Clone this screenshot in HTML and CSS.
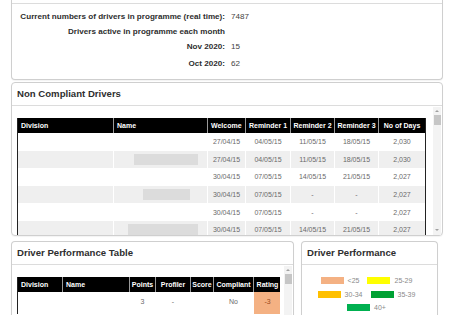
FILE: index.html
```html
<!DOCTYPE html>
<html>
<head>
<meta charset="utf-8">
<link rel="stylesheet" href="styles.css">
</head>
<body>
<div class="page">
  <section class="panel panel-cut">
    <div class="panel-body stats">
      <div class="stat-label">Current numbers of drivers in programme (real time):</div><div class="stat-value">7487</div>
      <div class="stat-label">Drivers active in programme each month</div><div class="stat-value"></div>
      <div class="stat-label">Nov 2020:</div><div class="stat-value">15</div>
      <div class="stat-label last">Oct 2020:</div><div class="stat-value last">62</div>
    </div>
  </section>

  <section class="panel panel-nc">
    <h2 class="panel-title">Non Compliant Drivers</h2>
    <div class="panel-body scroll-wrap nc-body">
      <div class="scroll-content nc-content">
        <table class="grid nc-table">
          <colgroup>
            <col class="c-div"><col class="c-name"><col class="c-wel"><col class="c-r1"><col class="c-r2"><col class="c-r3"><col class="c-days">
          </colgroup>
          <thead>
            <tr><th class="left">Division</th><th class="left">Name</th><th class="left">Welcome</th><th>Reminder 1</th><th>Reminder 2</th><th>Reminder 3</th><th>No of Days</th></tr>
          </thead>
          <tbody>
            <tr><td></td><td></td><td>27/04/15</td><td>04/05/15</td><td>11/05/15</td><td>18/05/15</td><td>2,030</td></tr>
            <tr class="alt"><td></td><td><span class="redact r1"></span></td><td>27/04/15</td><td>04/05/15</td><td>11/05/15</td><td>18/05/15</td><td>2,030</td></tr>
            <tr><td></td><td></td><td>30/04/15</td><td>07/05/15</td><td>14/05/15</td><td>21/05/15</td><td>2,027</td></tr>
            <tr class="alt"><td></td><td><span class="redact r2"></span></td><td>30/04/15</td><td>07/05/15</td><td>-</td><td>-</td><td>2,027</td></tr>
            <tr><td></td><td></td><td>30/04/15</td><td>07/05/15</td><td>-</td><td>-</td><td>2,027</td></tr>
            <tr class="alt"><td></td><td><span class="redact r3"></span></td><td>30/04/15</td><td>07/05/15</td><td>14/05/15</td><td>21/05/15</td><td>2,027</td></tr>
          </tbody>
        </table>
      </div>
      <div class="scrollbar nc-bar">
        <span class="arrow up"></span>
        <span class="thumb"></span>
        <span class="spacer"></span>
        <span class="arrow down"></span>
      </div>
    </div>
  </section>

  <div class="bottom-row">
    <section class="panel">
      <h2 class="panel-title">Driver Performance Table</h2>
      <div class="panel-body scroll-wrap">
        <div class="scroll-content perf-content">
          <table class="grid perf-table">
            <colgroup>
              <col class="p-div"><col class="p-name"><col class="p-pts"><col class="p-prof"><col class="p-score"><col class="p-comp"><col class="p-rate">
            </colgroup>
            <thead>
              <tr><th class="left">Division</th><th class="left">Name</th><th>Points</th><th>Profiler</th><th>Score</th><th>Compliant</th><th>Rating</th></tr>
            </thead>
            <tbody>
              <tr><td></td><td></td><td>3</td><td>-</td><td></td><td>No</td><td class="rate-low">-3</td></tr>
            </tbody>
          </table>
        </div>
        <div class="scrollbar perf-bar">
          <span class="arrow up"></span>
          <span class="thumb"></span>
          <span class="spacer"></span>
        </div>
      </div>
    </section>

    <section class="panel">
      <h2 class="panel-title">Driver Performance</h2>
      <div class="panel-body legend">
        <div class="legend-row">
          <span class="item"><i class="sw c-salmon"></i>&lt;25</span>
          <span class="item"><i class="sw c-yellow"></i>25-29</span>
        </div>
        <div class="legend-row">
          <span class="item"><i class="sw c-orange"></i>30-34</span>
          <span class="item"><i class="sw c-green"></i>35-39</span>
        </div>
        <div class="legend-row">
          <span class="item"><i class="sw c-green2"></i>40+</span>
        </div>
      </div>
    </section>
  </div>
</div>
</body>
</html>
```
FILE: styles.css
```css
* { box-sizing: border-box; }
html, body { margin: 0; padding: 0; background: #fff; }
body {
  font-family: "Liberation Sans", Arial, sans-serif;
  color: #333;
  overflow: hidden;
}
.page {
  width: 450px;
  padding: 0 7px 0 11px;
}

/* panels */
.panel {
  border: 1px solid #cfcfcf;
  border-radius: 4px;
  background: #fff;
  box-shadow: 0 1px 1px rgba(0,0,0,0.05);
}
.panel-cut {
  border-top: 0;
  border-radius: 0 0 4px 4px;
  padding-top: 3px;
}
.panel-title {
  margin: 0;
  height: 23px;
  line-height: 22px;
  padding: 0 0 0 5px;
  border-bottom: 1px solid #dcdcdc;
  font-size: 9.6px;
  font-weight: bold;
  color: #2e2e2e;
}
.panel-cut .panel-body { border-top: 1px solid #dcdcdc; }

/* stats */
.stats {
  display: grid;
  grid-template-columns: 213px auto;
  column-gap: 6px;
  padding: 5px 0 8px 0;
  font-size: 8.1px;
  line-height: 15px;
}
.stat-label { text-align: right; font-weight: bold; color: #2e2e2e; }
.stat-value { color: #444; }
.stats .last { margin-top: 2px; }

/* non compliant */
.panel-nc { margin-top: 2px; }
.scroll-wrap { display: flex; }
.nc-body { height: 129px; }
.scroll-content { flex: 1; overflow: hidden; }
.nc-content { padding: 12px 0 0 5px; }

.grid {
  border-collapse: collapse;
  table-layout: fixed;
  border-left: 1px solid #222;
  border-right: 1px solid #222;
  font-size: 7px;
}
.grid th {
  background: #000;
  color: #fff;
  font-weight: bold;
  height: 15px;
  padding: 0 1px;
  text-align: center;
  border-left: 1px solid #9a9a9a;
  white-space: nowrap;
}
.grid th:first-child { border-left: 0; }
.grid th.left { text-align: left; padding-left: 3px; }
.grid td {
  height: 17.6px;
  padding: 0;
  text-align: center;
  color: #6a6a6a;
  border-left: 1.5px solid #fff;
  white-space: nowrap;
}
.grid td:first-child { border-left: 0; }
.grid tr.alt td { background: #efefef; }

.nc-table { width: 409px; }
.c-div { width: 96px; }
.c-name { width: 94px; }
.c-wel { width: 38px; }
.c-r1 { width: 45px; }
.c-r2 { width: 44px; }
.c-r3 { width: 44px; }
.c-days { width: 47px; }

.redact {
  display: block;
  height: 11px;
  background: #dcdcdc;
}
.redact.r1 { width: 64px; margin-left: 20px; }
.redact.r2 { width: 47px; margin-left: 29px; }
.redact.r3 { width: 70px; margin-left: 14px; }

/* fake scrollbar */
.scrollbar {
  width: 8px;
  margin: 1px 1px 0 7px;
  background: #f3f3f3;
  display: flex;
  flex-direction: column;
  align-items: center;
}
.scrollbar .arrow {
  width: 0; height: 0;
  border-left: 2px solid transparent;
  border-right: 2px solid transparent;
  margin: 3px 0 2px;
}
.scrollbar .arrow.up { border-bottom: 2px solid #a0a0a0; }
.scrollbar .arrow.down { border-top: 2px solid #a0a0a0; margin: 2px 0 4px; }
.scrollbar .thumb {
  width: 7px;
  height: 10px;
  background: #c6c6c6;
  margin-top: 1px;
}
.scrollbar .spacer { flex: 1; }

/* bottom row */
.bottom-row {
  margin-top: 5px;
  display: grid;
  grid-template-columns: 283px 137px;
  column-gap: 7px;
  align-items: start;
}
.bottom-row .panel { height: 80px; overflow: hidden; border-bottom: 0; border-radius: 4px 4px 0 0; }

.perf-content { padding: 12px 0 0 5px; }
.perf-table { width: 264px; }
.p-div { width: 45px; }
.p-name { width: 67px; }
.p-pts { width: 26px; }
.p-prof { width: 35px; }
.p-score { width: 23px; }
.p-comp { width: 40px; }
.p-rate { width: 28px; }
.perf-table td { height: 22px; padding-bottom: 4px; }
.grid td.rate-low { background: #f4b183; color: #9c4a1a; }
.perf-bar { height: 60px; margin-left: 4px; }

/* legend */
.legend {
  padding: 9px 6px 0 0;
  font-size: 7px;
  color: #8a8a8a;
}
.legend-row {
  display: flex;
  justify-content: center;
  gap: 8px;
  height: 13.5px;
  align-items: center;
}
.item { display: inline-flex; align-items: center; gap: 4px; }
.sw { display: inline-block; width: 23px; height: 7px; }
.c-salmon { background: #f4b183; }
.c-yellow { background: #ffff00; }
.c-orange { background: #ffc000; }
.c-green { background: #00a133; }
.c-green2 { background: #00b050; }
```
